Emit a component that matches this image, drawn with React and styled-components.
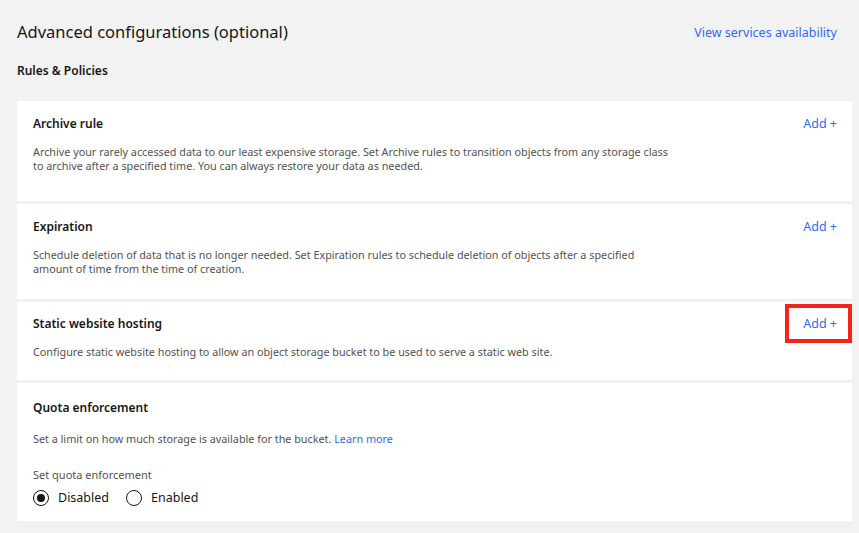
import React from "react";
import styled, { createGlobalStyle } from "styled-components";

const GlobalStyle = createGlobalStyle`
  body {
    margin: 0;
    background: #f2f2f2;
    font-family: "Noto Sans", "Open Sans", sans-serif;
    color: #161616;
  }
`;

const Page = styled.div`
  padding: 20px 7px 11px 17px;
`;

const Header = styled.div`
  display: flex;
  justify-content: space-between;
  align-items: center;
  padding-right: 15px;
`;

const PageTitle = styled.h1`
  margin: 0;
  font-size: 16.5px;
  font-weight: 400;
  line-height: 24px;
`;

const Link = styled.a`
  color: #2f6bf5;
  font-size: ${(p) => p.$size || 12.5}px;
  text-decoration: none;
  cursor: pointer;
`;

const SectionTitle = styled.h2`
  margin: 19px 0 22px;
  font-size: 12px;
  font-weight: 600;
  line-height: 16px;
`;

const CardList = styled.div`
  display: flex;
  flex-direction: column;
  gap: 3px;
`;

const Card = styled.section`
  background: #fff;
  min-height: ${(p) => p.$height}px;
  box-sizing: border-box;
  padding: ${(p) => p.$top || 15}px 15px 0 16px;
`;

const CardHeader = styled.div`
  display: flex;
  justify-content: space-between;
  align-items: center;
`;

const CardTitle = styled.h3`
  margin: 0;
  font-size: 12px;
  font-weight: 600;
  line-height: 16px;
`;

const AddLink = styled(Link)`
  position: relative;
  font-size: 12.5px;
  line-height: 16px;

  ${(p) =>
    p.$highlight &&
    `
    &::after {
      content: "";
      position: absolute;
      left: -18px;
      right: -15px;
      top: -12px;
      bottom: -11px;
      border: 4px solid #f5241a;
    }
  `}
`;

const Description = styled.p`
  margin: ${(p) => p.$gap || 13}px 0 0;
  max-width: 641px;
  font-size: 10.8px;
  line-height: 14px;
  color: #525252;
`;

const FieldLabel = styled.div`
  margin-top: 22px;
  font-size: 11px;
  line-height: 14px;
  color: #525252;
`;

const RadioGroup = styled.div`
  display: flex;
  align-items: center;
  gap: 17px;
  margin-top: 8px;
`;

const RadioOption = styled.label`
  display: flex;
  align-items: center;
  gap: 9px;
  font-size: 12.5px;
  line-height: 16px;
  color: #161616;
`;

const RadioCircle = styled.span`
  width: 16px;
  height: 16px;
  box-sizing: border-box;
  border: 1.5px solid #161616;
  border-radius: 50%;
  display: flex;
  align-items: center;
  justify-content: center;

  &::after {
    content: "";
    width: 8px;
    height: 8px;
    border-radius: 50%;
    background: ${(p) => (p.$checked ? "#161616" : "transparent")};
  }
`;

const rules = [
  {
    title: "Archive rule",
    height: 100,
    text: "Archive your rarely accessed data to our least expensive storage. Set Archive rules to transition objects from any storage class to archive after a specified time. You can always restore your data as needed.",
  },
  {
    title: "Expiration",
    height: 95,
    text: "Schedule deletion of data that is no longer needed. Set Expiration rules to schedule deletion of objects after a specified amount of time from the time of creation.",
  },
  {
    title: "Static website hosting",
    height: 78,
    top: 14,
    highlight: true,
    text: "Configure static website hosting to allow an object storage bucket to be used to serve a static web site.",
  },
];

export default function App() {
  return (
    <>
      <GlobalStyle />
      <Page>
        <Header>
          <PageTitle>Advanced configurations (optional)</PageTitle>
          <Link>View services availability</Link>
        </Header>
        <SectionTitle>Rules &amp; Policies</SectionTitle>

        <CardList>
          {rules.map((r) => (
            <Card key={r.title} $height={r.height} $top={r.top}>
              <CardHeader>
                <CardTitle>{r.title}</CardTitle>
                <AddLink $highlight={r.highlight}>Add +</AddLink>
              </CardHeader>
              <Description>{r.text}</Description>
            </Card>
          ))}

          <Card $height={138} $top={17}>
            <CardTitle>Quota enforcement</CardTitle>
            <Description $gap={16}>
              Set a limit on how much storage is available for the bucket.{" "}
              <Link $size={10.8}>Learn more</Link>
            </Description>
            <FieldLabel>Set quota enforcement</FieldLabel>
            <RadioGroup>
              <RadioOption>
                <RadioCircle $checked />
                Disabled
              </RadioOption>
              <RadioOption>
                <RadioCircle />
                Enabled
              </RadioOption>
            </RadioGroup>
          </Card>
        </CardList>
      </Page>
    </>
  );
}
